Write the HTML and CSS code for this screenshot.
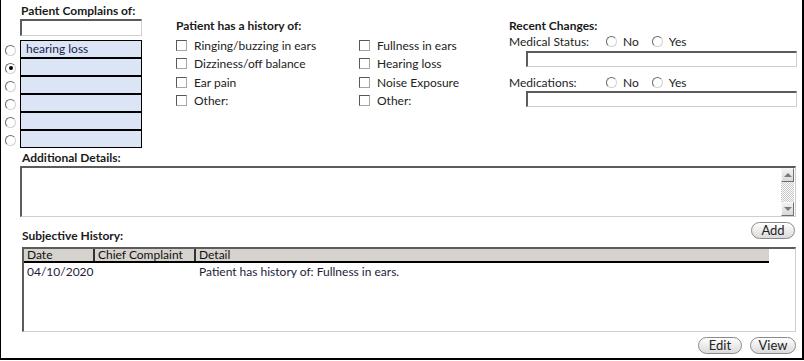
FILE: index.html
```html
<!DOCTYPE html>
<html>
<head>
<meta charset="utf-8">
<link rel="stylesheet" href="styles.css">
</head>
<body>
<div class="frame">
  <div class="top">
    <div class="col-complaints">
      <div class="title t1">Patient Complains of:</div>
      <div class="field field-small"></div>
      <div class="clist">
        <div class="crow"><span class="radio"></span><div class="cbox">hearing loss</div></div>
        <div class="crow"><span class="radio on"></span><div class="cbox"></div></div>
        <div class="crow"><span class="radio"></span><div class="cbox"></div></div>
        <div class="crow"><span class="radio"></span><div class="cbox"></div></div>
        <div class="crow"><span class="radio"></span><div class="cbox"></div></div>
        <div class="crow"><span class="radio"></span><div class="cbox"></div></div>
      </div>
    </div>
    <div class="col-history">
      <div class="title">Patient has a history of:</div>
      <div class="hgrid">
        <div class="hitem"><span class="cb"></span>Ringing/buzzing in ears</div>
        <div class="hitem"><span class="cb"></span>Fullness in ears</div>
        <div class="hitem"><span class="cb"></span>Dizziness/off balance</div>
        <div class="hitem"><span class="cb"></span>Hearing loss</div>
        <div class="hitem"><span class="cb"></span>Ear pain</div>
        <div class="hitem"><span class="cb"></span>Noise Exposure</div>
        <div class="hitem"><span class="cb"></span>Other:</div>
        <div class="hitem"><span class="cb"></span>Other:</div>
      </div>
    </div>
    <div class="col-recent">
      <div class="title">Recent Changes:</div>
      <div class="rline first"><span class="rlabel">Medical Status:</span><span class="radio"></span><span class="opt">No</span><span class="radio"></span><span class="opt">Yes</span></div>
      <div class="field field-wide"></div>
      <div class="rline second"><span class="rlabel">Medications:</span><span class="radio"></span><span class="opt">No</span><span class="radio"></span><span class="opt">Yes</span></div>
      <div class="field field-wide f2"></div>
    </div>
  </div>

  <div class="section">
    <div class="title details-title">Additional Details:</div>
    <div class="textarea">
      <div class="ta-body"></div>
      <div class="scrollbar">
        <div class="sbtn"><span class="arrow up"></span></div>
        <div class="track"></div>
        <div class="sbtn"><span class="arrow down"></span></div>
      </div>
    </div>
    <div class="hist-head">
      <div class="title hist-title">Subjective History:</div>
      <button class="btn btn-add">Add</button>
    </div>
    <div class="table">
      <div class="thead">
        <div class="th c-date">Date</div>
        <div class="th c-chief">Chief Complaint</div>
        <div class="th c-detail">Detail</div>
      </div>
      <div class="trow">
        <div class="td c-date">04/10/2020</div>
        <div class="td c-chief"></div>
        <div class="td c-detail">Patient has history of: Fullness in ears.</div>
      </div>
    </div>
    <div class="actions">
      <button class="btn btn-edit">Edit</button>
      <button class="btn btn-view">View</button>
    </div>
  </div>
</div>
</body>
</html>
```

FILE: styles.css
```css
* { box-sizing: border-box; }
html, body { margin: 0; padding: 0; background: #fff; }
body {
  font-family: "Lato", "Noto Sans", sans-serif;
  font-size: 12px;
  color: #1e1e28;
}
.frame {
  width: 804px;
  height: 360px;
  border-left: 1px solid #000;
  border-right: 2px solid #000;
  border-bottom: 2px solid #000;
  background: #fff;
  overflow: hidden;
}
.title { font-weight: 700; line-height: 14px; height: 14px; color: #1a1a1a; white-space: nowrap; }

.top { display: flex; height: 148px; }

/* complaints column */
.col-complaints { width: 175px; padding-top: 4px; padding-left: 4px; }
.t1 { padding-left: 16px; margin-bottom: 1px; }
.field {
  border-top: 2px solid #5c5c5c;
  border-left: 2px solid #5c5c5c;
  border-right: 1px solid #cfcfcf;
  border-bottom: 1px solid #cfcfcf;
  background: #fff;
}
.field-small { width: 122px; height: 17px; margin-left: 15px; }
.clist { margin-top: 4px; }
.crow { display: flex; align-items: center; height: 18px; }
.crow .radio { margin-top: 2px; }
.cbox {
  margin-left: 4px;
  width: 122px;
  height: 18px;
  border: 1px solid #000;
  background: #dbe5f6;
  color: #1c1c4a;
  line-height: 16px;
  padding-left: 5px;
}

.radio {
  display: inline-block;
  flex: none;
  position: relative;
  width: 11px;
  height: 11px;
  border-radius: 50%;
  border: 1px solid;
  border-color: #6a6a6a #d2d2d2 #d2d2d2 #6a6a6a;
  background: #fff;
}
.radio.on::after {
  content: "";
  position: absolute;
  left: 2.5px; top: 2.5px;
  width: 4px; height: 4px;
  border-radius: 50%;
  background: #000;
}

/* history column */
.col-history { width: 333px; padding-top: 19px; }
.hgrid { display: grid; grid-template-columns: 183px 150px; grid-auto-rows: 18.5px; margin-top: 3px; }
.hitem { display: flex; align-items: center; white-space: nowrap; color: #222; }
.cb {
  width: 11px; height: 11px;
  margin-right: 7px;
  border: 1px solid;
  border-color: #585858 #a6a6a6 #a6a6a6 #585858;
  background: #fff;
  flex: none;
}

/* recent column */
.col-recent { width: 288px; padding-top: 19px; }
.rline { display: flex; align-items: center; height: 14px; color: #222; }
.rline.first { margin-top: 1px; }
.rline.second { margin-top: 8px; }
.rlabel { width: 97px; }
.opt { margin-left: 6px; margin-right: 13px; }
.field-wide { width: 271px; height: 16px; margin-left: 17px; margin-top: 3px; }
.field-wide.f2 { margin-top: 2px; }

/* lower section */
.section { padding-left: 19px; padding-right: 6px; }
.details-title { margin-top: 3px; padding-left: 2px; }
.textarea {
  margin-top: 1px;
  height: 51px;
  display: flex;
  border-top: 2px solid #5c5c5c;
  border-left: 2px solid #5c5c5c;
  border-right: 1px solid #cfcfcf;
  border-bottom: 1px solid #cfcfcf;
}
.ta-body { flex: 1; }
.scrollbar { width: 13px; display: flex; flex-direction: column; margin-right: 1px; }
.sbtn {
  height: 14px;
  background: linear-gradient(#f2f2f2, #d9d9d9);
  border: 1px solid;
  border-color: #f8f8f8 #6e6e6e #6e6e6e #f8f8f8;
  display: flex; align-items: center; justify-content: center;
}
.track {
  flex: 1;
  background-color: #fff;
  background-image: repeating-conic-gradient(#c4c4c4 0 25%, #ffffff 0 50%);
  background-size: 2px 2px;
}
.arrow { width: 0; height: 0; border-left: 4px solid transparent; border-right: 4px solid transparent; }
.arrow.up { border-bottom: 4px solid #7a7a7a; }
.arrow.down { border-top: 4px solid #7a7a7a; }

.hist-head { display: flex; justify-content: space-between; height: 30px; }
.hist-title { margin-top: 12px; padding-left: 2px; }
.btn {
  font-family: "Lato", "Noto Sans", sans-serif;
  font-size: 13px;
  color: #222;
  height: 17px;
  line-height: 15px;
  padding: 0;
  border: 1px solid #8a8a8a;
  border-radius: 9px;
  background: linear-gradient(#ffffff, #ececec 50%, #dadada);
}
.btn-add { width: 44px; margin-top: 5px; margin-right: 1px; }

.table {
  margin-left: 2px;
  height: 85px;
  border-top: 2px solid #5c5c5c;
  border-left: 2px solid #5c5c5c;
  border-right: 1px solid #cfcfcf;
  border-bottom: 1px solid #cfcfcf;
}
.thead {
  display: flex;
  width: 745px;
  height: 14px;
  background: #d6d3ce;
  border-bottom: 2px solid #000;
  line-height: 12px;
  color: #111;
}
.th { padding-left: 3px; white-space: nowrap; }
.c-date { width: 71px; }
.c-chief { width: 101px; }
.c-detail { flex: 1; }
.thead .c-date, .thead .c-chief { border-right: 2px solid #333; }
.trow { display: flex; width: 745px; height: 16px; line-height: 16px; margin-top: 1px; color: #1c1c3a; }
.td { padding-left: 3px; white-space: nowrap; }
.trow .c-date, .trow .c-chief { border-right: 2px solid transparent; }

.actions { display: flex; justify-content: flex-end; gap: 8px; margin-top: 5px; }
.btn-edit { width: 44px; }
.btn-view { width: 46px; }
```
